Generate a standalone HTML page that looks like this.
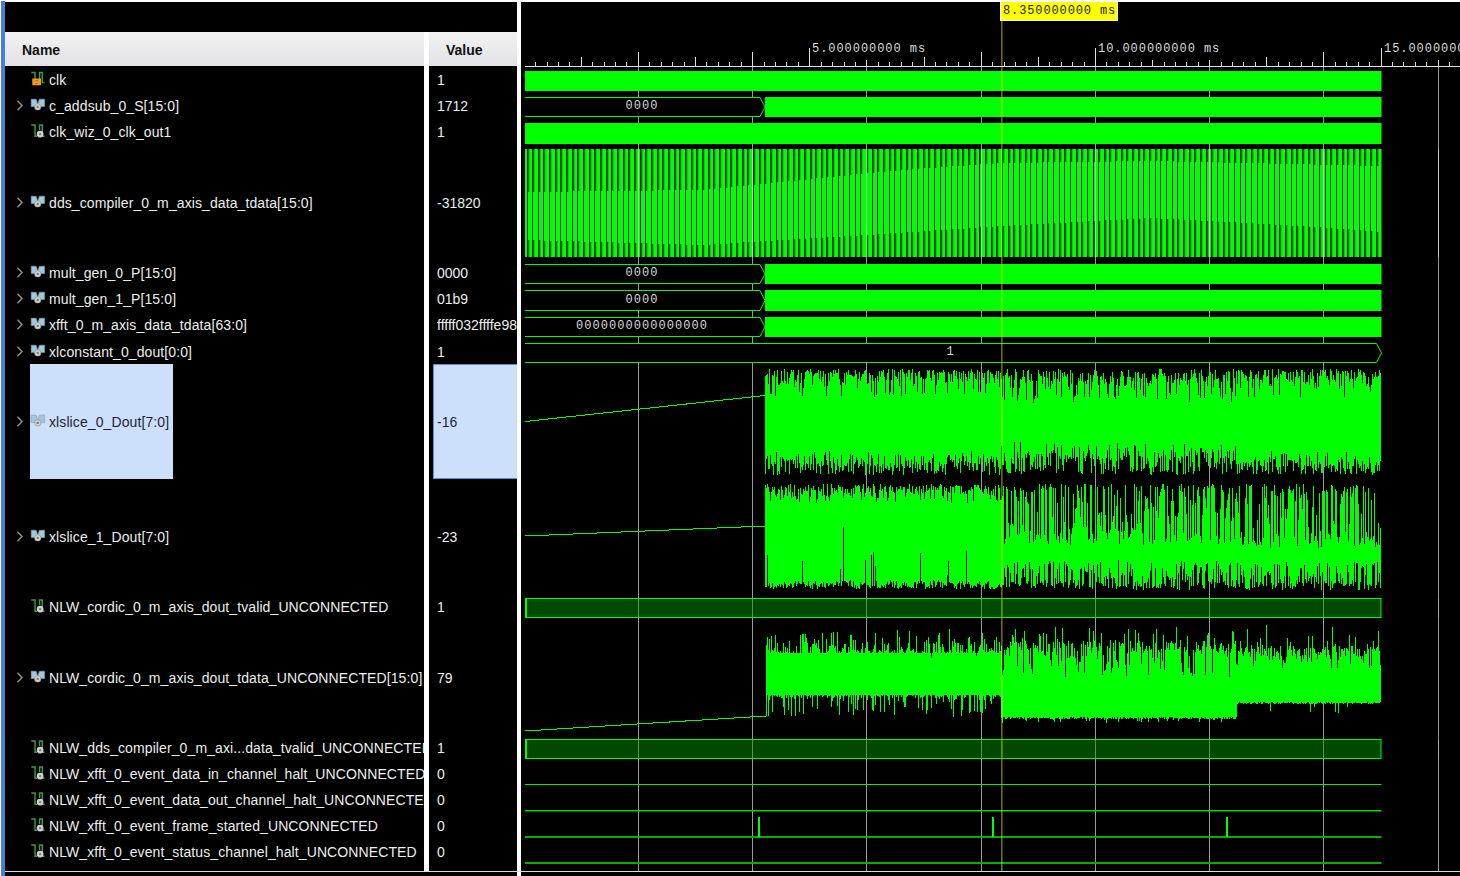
<!DOCTYPE html><html><head><meta charset="utf-8"><style>
html,body{margin:0;padding:0;width:1460px;height:876px;overflow:hidden;background:#000;}
.a{position:absolute;}
.t{position:absolute;font-family:"Liberation Sans",sans-serif;font-size:14px;letter-spacing:0.1px;color:#eeeeee;white-space:nowrap;line-height:16px;}
.hd{position:absolute;font-family:"Liberation Sans",sans-serif;font-size:14px;font-weight:bold;color:#111;white-space:nowrap;line-height:16px;}
svg{position:absolute;left:0;top:0;}
</style></head><body><div class="a" style="left:0;top:0;width:1460px;height:2px;background:#fff"></div><div class="a" style="left:0;top:0;width:1px;height:876px;background:#fff"></div><div class="a" style="left:1px;top:1px;width:4px;height:875px;background:#4a7fd4"></div><div class="a" style="left:5px;top:32px;width:419px;height:34px;background:linear-gradient(#f3f3f3,#e2e2e6)"></div><div class="a" style="left:429px;top:32px;width:88px;height:34px;background:linear-gradient(#f3f3f3,#e2e2e6)"></div><div class="hd" style="left:22px;top:42px">Name</div><div class="hd" style="left:446px;top:42px">Value</div><div class="a" style="left:424px;top:32px;width:5px;height:839px;background:#fff"></div><div class="a" style="left:517px;top:2px;width:4px;height:874px;background:#fff"></div><div class="a" style="left:5px;top:871px;width:1455px;height:1px;background:#dcdcdc"></div><div class="a" style="left:30px;top:364px;width:143px;height:115px;background:#cde0fb"></div><div class="a" style="left:433px;top:364px;width:84px;height:115px;background:#cde0fb;box-shadow:inset 1px 1px 0 #5a8fd0, inset 0 -1px 0 #5a8fd0"></div><div class="a" style="left:5px;top:66px;width:419px;height:805px;overflow:hidden"><div class="t" style="left:44px;top:6px;color:#eeeeee">clk</div><svg style="left:21px;top:2px" width="24" height="22"><path d="M5.3 4.5 H9 V11 M13.6 11 V4.5 H16.3 V14.6 H18.5" stroke="#3a9e42" stroke-width="1.4" fill="none"/><rect x="6.3" y="10.5" width="8.7" height="6.8" fill="#f29a20"/><rect x="9.6" y="12" width="2" height="1" fill="#8a6a3a"/><rect x="9.6" y="15" width="2" height="1" fill="#8a6a3a"/></svg><div class="t" style="left:44px;top:32px;color:#eeeeee">c_addsub_0_S[15:0]</div><svg style="left:11px;top:34px" width="8" height="11"><path d="M1.5 0.8 L6 5.5 L1.5 10.2" stroke="#8a8a8a" stroke-width="1.6" fill="none"/></svg><svg style="left:21px;top:28px" width="24" height="22"><path d="M5.2 5.2 H10.1 L11.75 10.2 L13.4 5.2 H18.6 V12.6 H5.2 Z" fill="#9ec8e0" stroke="#8a9aa4" stroke-width="0.6"/><circle cx="11.75" cy="12.9" r="3.2" fill="#d2d2d2" stroke="#8a8a8a" stroke-width="0.6"/><circle cx="11.75" cy="12.9" r="1.2" fill="#7a7a7a"/></svg><div class="t" style="left:44px;top:58px;color:#eeeeee">clk_wiz_0_clk_out1</div><svg style="left:21px;top:54px" width="24" height="22"><path d="M5.3 5 H9 V16.3 H11 M13.6 10 V5 H16.3 V16.3 H18.6" stroke="#3a9e42" stroke-width="1.4" fill="none"/><circle cx="14.1" cy="14.1" r="3.4" fill="#d2d2d2"/><circle cx="14.1" cy="14.1" r="1.2" fill="#7a7a7a"/></svg><div class="t" style="left:44px;top:129px;color:#eeeeee">dds_compiler_0_m_axis_data_tdata[15:0]</div><svg style="left:11px;top:131px" width="8" height="11"><path d="M1.5 0.8 L6 5.5 L1.5 10.2" stroke="#8a8a8a" stroke-width="1.6" fill="none"/></svg><svg style="left:21px;top:125px" width="24" height="22"><path d="M5.2 5.2 H10.1 L11.75 10.2 L13.4 5.2 H18.6 V12.6 H5.2 Z" fill="#9ec8e0" stroke="#8a9aa4" stroke-width="0.6"/><circle cx="11.75" cy="12.9" r="3.2" fill="#d2d2d2" stroke="#8a8a8a" stroke-width="0.6"/><circle cx="11.75" cy="12.9" r="1.2" fill="#7a7a7a"/></svg><div class="t" style="left:44px;top:199px;color:#eeeeee">mult_gen_0_P[15:0]</div><svg style="left:11px;top:201px" width="8" height="11"><path d="M1.5 0.8 L6 5.5 L1.5 10.2" stroke="#8a8a8a" stroke-width="1.6" fill="none"/></svg><svg style="left:21px;top:195px" width="24" height="22"><path d="M5.2 5.2 H10.1 L11.75 10.2 L13.4 5.2 H18.6 V12.6 H5.2 Z" fill="#9ec8e0" stroke="#8a9aa4" stroke-width="0.6"/><circle cx="11.75" cy="12.9" r="3.2" fill="#d2d2d2" stroke="#8a8a8a" stroke-width="0.6"/><circle cx="11.75" cy="12.9" r="1.2" fill="#7a7a7a"/></svg><div class="t" style="left:44px;top:225px;color:#eeeeee">mult_gen_1_P[15:0]</div><svg style="left:11px;top:227px" width="8" height="11"><path d="M1.5 0.8 L6 5.5 L1.5 10.2" stroke="#8a8a8a" stroke-width="1.6" fill="none"/></svg><svg style="left:21px;top:221px" width="24" height="22"><path d="M5.2 5.2 H10.1 L11.75 10.2 L13.4 5.2 H18.6 V12.6 H5.2 Z" fill="#9ec8e0" stroke="#8a9aa4" stroke-width="0.6"/><circle cx="11.75" cy="12.9" r="3.2" fill="#d2d2d2" stroke="#8a8a8a" stroke-width="0.6"/><circle cx="11.75" cy="12.9" r="1.2" fill="#7a7a7a"/></svg><div class="t" style="left:44px;top:251px;color:#eeeeee">xfft_0_m_axis_data_tdata[63:0]</div><svg style="left:11px;top:253px" width="8" height="11"><path d="M1.5 0.8 L6 5.5 L1.5 10.2" stroke="#8a8a8a" stroke-width="1.6" fill="none"/></svg><svg style="left:21px;top:247px" width="24" height="22"><path d="M5.2 5.2 H10.1 L11.75 10.2 L13.4 5.2 H18.6 V12.6 H5.2 Z" fill="#9ec8e0" stroke="#8a9aa4" stroke-width="0.6"/><circle cx="11.75" cy="12.9" r="3.2" fill="#d2d2d2" stroke="#8a8a8a" stroke-width="0.6"/><circle cx="11.75" cy="12.9" r="1.2" fill="#7a7a7a"/></svg><div class="t" style="left:44px;top:278px;color:#eeeeee">xlconstant_0_dout[0:0]</div><svg style="left:11px;top:280px" width="8" height="11"><path d="M1.5 0.8 L6 5.5 L1.5 10.2" stroke="#8a8a8a" stroke-width="1.6" fill="none"/></svg><svg style="left:21px;top:274px" width="24" height="22"><path d="M5.2 5.2 H10.1 L11.75 10.2 L13.4 5.2 H18.6 V12.6 H5.2 Z" fill="#9ec8e0" stroke="#8a9aa4" stroke-width="0.6"/><circle cx="11.75" cy="12.9" r="3.2" fill="#d2d2d2" stroke="#8a8a8a" stroke-width="0.6"/><circle cx="11.75" cy="12.9" r="1.2" fill="#7a7a7a"/></svg><div class="t" style="left:44px;top:348px;color:#1e1e3c">xlslice_0_Dout[7:0]</div><svg style="left:11px;top:350px" width="8" height="11"><path d="M1.5 0.8 L6 5.5 L1.5 10.2" stroke="#8a8a8a" stroke-width="1.6" fill="none"/></svg><svg style="left:21px;top:344px" width="24" height="22"><path d="M5.2 5.2 H10.1 L11.75 10.2 L13.4 5.2 H18.6 V12.6 H5.2 Z" fill="#9ec8e0" stroke="#8a9aa4" stroke-width="0.6"/><circle cx="11.75" cy="12.9" r="3.2" fill="#d2d2d2" stroke="#8a8a8a" stroke-width="0.6"/><circle cx="11.75" cy="12.9" r="1.2" fill="#7a7a7a"/></svg><div class="t" style="left:44px;top:463px;color:#eeeeee">xlslice_1_Dout[7:0]</div><svg style="left:11px;top:465px" width="8" height="11"><path d="M1.5 0.8 L6 5.5 L1.5 10.2" stroke="#8a8a8a" stroke-width="1.6" fill="none"/></svg><svg style="left:21px;top:459px" width="24" height="22"><path d="M5.2 5.2 H10.1 L11.75 10.2 L13.4 5.2 H18.6 V12.6 H5.2 Z" fill="#9ec8e0" stroke="#8a9aa4" stroke-width="0.6"/><circle cx="11.75" cy="12.9" r="3.2" fill="#d2d2d2" stroke="#8a8a8a" stroke-width="0.6"/><circle cx="11.75" cy="12.9" r="1.2" fill="#7a7a7a"/></svg><div class="t" style="left:44px;top:533px;color:#eeeeee">NLW_cordic_0_m_axis_dout_tvalid_UNCONNECTED</div><svg style="left:21px;top:529px" width="24" height="22"><path d="M5.3 5 H9 V16.3 H11 M13.6 10 V5 H16.3 V16.3 H18.6" stroke="#3a9e42" stroke-width="1.4" fill="none"/><circle cx="14.1" cy="14.1" r="3.4" fill="#d2d2d2"/><circle cx="14.1" cy="14.1" r="1.2" fill="#7a7a7a"/></svg><div class="t" style="left:44px;top:604px;color:#eeeeee">NLW_cordic_0_m_axis_dout_tdata_UNCONNECTED[15:0]</div><svg style="left:11px;top:606px" width="8" height="11"><path d="M1.5 0.8 L6 5.5 L1.5 10.2" stroke="#8a8a8a" stroke-width="1.6" fill="none"/></svg><svg style="left:21px;top:600px" width="24" height="22"><path d="M5.2 5.2 H10.1 L11.75 10.2 L13.4 5.2 H18.6 V12.6 H5.2 Z" fill="#9ec8e0" stroke="#8a9aa4" stroke-width="0.6"/><circle cx="11.75" cy="12.9" r="3.2" fill="#d2d2d2" stroke="#8a8a8a" stroke-width="0.6"/><circle cx="11.75" cy="12.9" r="1.2" fill="#7a7a7a"/></svg><div class="t" style="left:44px;top:674px;color:#eeeeee">NLW_dds_compiler_0_m_axi...data_tvalid_UNCONNECTED</div><svg style="left:21px;top:670px" width="24" height="22"><path d="M5.3 5 H9 V16.3 H11 M13.6 10 V5 H16.3 V16.3 H18.6" stroke="#3a9e42" stroke-width="1.4" fill="none"/><circle cx="14.1" cy="14.1" r="3.4" fill="#d2d2d2"/><circle cx="14.1" cy="14.1" r="1.2" fill="#7a7a7a"/></svg><div class="t" style="left:44px;top:700px;color:#eeeeee">NLW_xfft_0_event_data_in_channel_halt_UNCONNECTED</div><svg style="left:21px;top:696px" width="24" height="22"><path d="M5.3 5 H9 V16.3 H11 M13.6 10 V5 H16.3 V16.3 H18.6" stroke="#3a9e42" stroke-width="1.4" fill="none"/><circle cx="14.1" cy="14.1" r="3.4" fill="#d2d2d2"/><circle cx="14.1" cy="14.1" r="1.2" fill="#7a7a7a"/></svg><div class="t" style="left:44px;top:726px;color:#eeeeee">NLW_xfft_0_event_data_out_channel_halt_UNCONNECTED</div><svg style="left:21px;top:722px" width="24" height="22"><path d="M5.3 5 H9 V16.3 H11 M13.6 10 V5 H16.3 V16.3 H18.6" stroke="#3a9e42" stroke-width="1.4" fill="none"/><circle cx="14.1" cy="14.1" r="3.4" fill="#d2d2d2"/><circle cx="14.1" cy="14.1" r="1.2" fill="#7a7a7a"/></svg><div class="t" style="left:44px;top:752px;color:#eeeeee">NLW_xfft_0_event_frame_started_UNCONNECTED</div><svg style="left:21px;top:748px" width="24" height="22"><path d="M5.3 5 H9 V16.3 H11 M13.6 10 V5 H16.3 V16.3 H18.6" stroke="#3a9e42" stroke-width="1.4" fill="none"/><circle cx="14.1" cy="14.1" r="3.4" fill="#d2d2d2"/><circle cx="14.1" cy="14.1" r="1.2" fill="#7a7a7a"/></svg><div class="t" style="left:44px;top:778px;color:#eeeeee">NLW_xfft_0_event_status_channel_halt_UNCONNECTED</div><svg style="left:21px;top:774px" width="24" height="22"><path d="M5.3 5 H9 V16.3 H11 M13.6 10 V5 H16.3 V16.3 H18.6" stroke="#3a9e42" stroke-width="1.4" fill="none"/><circle cx="14.1" cy="14.1" r="3.4" fill="#d2d2d2"/><circle cx="14.1" cy="14.1" r="1.2" fill="#7a7a7a"/></svg></div><div class="a" style="left:429px;top:66px;width:88px;height:805px;overflow:hidden"><div class="t" style="left:8px;top:6px;color:#eeeeee;letter-spacing:0">1</div><div class="t" style="left:8px;top:32px;color:#eeeeee;letter-spacing:0">1712</div><div class="t" style="left:8px;top:58px;color:#eeeeee;letter-spacing:0">1</div><div class="t" style="left:8px;top:129px;color:#eeeeee;letter-spacing:0">-31820</div><div class="t" style="left:8px;top:199px;color:#eeeeee;letter-spacing:0">0000</div><div class="t" style="left:8px;top:225px;color:#eeeeee;letter-spacing:0">01b9</div><div class="t" style="left:8px;top:251px;color:#eeeeee;letter-spacing:0">fffff032ffffe98</div><div class="t" style="left:8px;top:278px;color:#eeeeee;letter-spacing:0">1</div><div class="t" style="left:8px;top:348px;color:#1e1e3c;letter-spacing:0">-16</div><div class="t" style="left:8px;top:463px;color:#eeeeee;letter-spacing:0">-23</div><div class="t" style="left:8px;top:533px;color:#eeeeee;letter-spacing:0">1</div><div class="t" style="left:8px;top:604px;color:#eeeeee;letter-spacing:0">79</div><div class="t" style="left:8px;top:674px;color:#eeeeee;letter-spacing:0">1</div><div class="t" style="left:8px;top:700px;color:#eeeeee;letter-spacing:0">0</div><div class="t" style="left:8px;top:726px;color:#eeeeee;letter-spacing:0">0</div><div class="t" style="left:8px;top:752px;color:#eeeeee;letter-spacing:0">0</div><div class="t" style="left:8px;top:778px;color:#eeeeee;letter-spacing:0">0</div></div><svg width="1460" height="876" viewBox="0 0 1460 876"><defs><clipPath id="wc"><rect x="521" y="2" width="939" height="869"/></clipPath><pattern id="ddsB" x="524.15" y="0" width="5.66" height="300" patternUnits="userSpaceOnUse"><rect x="0" y="0" width="4.5" height="300" fill="#00ff00"/><rect x="4.5" y="0" width="0.5" height="300" fill="#004800"/></pattern><pattern id="ddsD" x="524.15" y="0" width="5.66" height="300" patternUnits="userSpaceOnUse"><rect x="0" y="0" width="3.3" height="300" fill="#00ff00"/><rect x="3.3" y="0" width="1.3" height="300" fill="#006000"/><rect x="4.6" y="0" width="1.06" height="300" fill="#001800"/></pattern></defs><g clip-path="url(#wc)"><line x1="638.5" y1="66" x2="638.5" y2="871" stroke="#9a9a9a" stroke-width="1"/><line x1="752.5" y1="66" x2="752.5" y2="871" stroke="#9a9a9a" stroke-width="1"/><line x1="866.5" y1="66" x2="866.5" y2="871" stroke="#9a9a9a" stroke-width="1"/><line x1="981.5" y1="66" x2="981.5" y2="871" stroke="#9a9a9a" stroke-width="1"/><line x1="1095.5" y1="66" x2="1095.5" y2="871" stroke="#9a9a9a" stroke-width="1"/><line x1="1209.5" y1="66" x2="1209.5" y2="871" stroke="#9a9a9a" stroke-width="1"/><line x1="1323.5" y1="66" x2="1323.5" y2="871" stroke="#9a9a9a" stroke-width="1"/><line x1="1438.5" y1="66" x2="1438.5" y2="871" stroke="#9a9a9a" stroke-width="1"/><line x1="525" y1="66.5" x2="1460" y2="66.5" stroke="#e0e0e0" stroke-width="1"/><line x1="535.5" y1="62" x2="535.5" y2="66" stroke="#e0e0e0" stroke-width="1"/><line x1="547.5" y1="62" x2="547.5" y2="66" stroke="#e0e0e0" stroke-width="1"/><line x1="558.5" y1="62" x2="558.5" y2="66" stroke="#e0e0e0" stroke-width="1"/><line x1="569.5" y1="62" x2="569.5" y2="66" stroke="#e0e0e0" stroke-width="1"/><line x1="581.5" y1="57" x2="581.5" y2="66" stroke="#e0e0e0" stroke-width="1"/><line x1="592.5" y1="62" x2="592.5" y2="66" stroke="#e0e0e0" stroke-width="1"/><line x1="604.5" y1="62" x2="604.5" y2="66" stroke="#e0e0e0" stroke-width="1"/><line x1="615.5" y1="62" x2="615.5" y2="66" stroke="#e0e0e0" stroke-width="1"/><line x1="626.5" y1="62" x2="626.5" y2="66" stroke="#e0e0e0" stroke-width="1"/><line x1="638.5" y1="52" x2="638.5" y2="66" stroke="#e0e0e0" stroke-width="1"/><line x1="649.5" y1="62" x2="649.5" y2="66" stroke="#e0e0e0" stroke-width="1"/><line x1="661.5" y1="62" x2="661.5" y2="66" stroke="#e0e0e0" stroke-width="1"/><line x1="672.5" y1="62" x2="672.5" y2="66" stroke="#e0e0e0" stroke-width="1"/><line x1="684.5" y1="62" x2="684.5" y2="66" stroke="#e0e0e0" stroke-width="1"/><line x1="695.5" y1="57" x2="695.5" y2="66" stroke="#e0e0e0" stroke-width="1"/><line x1="706.5" y1="62" x2="706.5" y2="66" stroke="#e0e0e0" stroke-width="1"/><line x1="718.5" y1="62" x2="718.5" y2="66" stroke="#e0e0e0" stroke-width="1"/><line x1="729.5" y1="62" x2="729.5" y2="66" stroke="#e0e0e0" stroke-width="1"/><line x1="741.5" y1="62" x2="741.5" y2="66" stroke="#e0e0e0" stroke-width="1"/><line x1="752.5" y1="52" x2="752.5" y2="66" stroke="#e0e0e0" stroke-width="1"/><line x1="764.5" y1="62" x2="764.5" y2="66" stroke="#e0e0e0" stroke-width="1"/><line x1="775.5" y1="62" x2="775.5" y2="66" stroke="#e0e0e0" stroke-width="1"/><line x1="786.5" y1="62" x2="786.5" y2="66" stroke="#e0e0e0" stroke-width="1"/><line x1="798.5" y1="62" x2="798.5" y2="66" stroke="#e0e0e0" stroke-width="1"/><line x1="809.5" y1="48" x2="809.5" y2="66" stroke="#e0e0e0" stroke-width="1"/><line x1="821.5" y1="62" x2="821.5" y2="66" stroke="#e0e0e0" stroke-width="1"/><line x1="832.5" y1="62" x2="832.5" y2="66" stroke="#e0e0e0" stroke-width="1"/><line x1="844.5" y1="62" x2="844.5" y2="66" stroke="#e0e0e0" stroke-width="1"/><line x1="855.5" y1="62" x2="855.5" y2="66" stroke="#e0e0e0" stroke-width="1"/><line x1="866.5" y1="60" x2="866.5" y2="66" stroke="#e0e0e0" stroke-width="1"/><line x1="878.5" y1="62" x2="878.5" y2="66" stroke="#e0e0e0" stroke-width="1"/><line x1="889.5" y1="62" x2="889.5" y2="66" stroke="#e0e0e0" stroke-width="1"/><line x1="901.5" y1="62" x2="901.5" y2="66" stroke="#e0e0e0" stroke-width="1"/><line x1="912.5" y1="62" x2="912.5" y2="66" stroke="#e0e0e0" stroke-width="1"/><line x1="924.5" y1="57" x2="924.5" y2="66" stroke="#e0e0e0" stroke-width="1"/><line x1="935.5" y1="62" x2="935.5" y2="66" stroke="#e0e0e0" stroke-width="1"/><line x1="946.5" y1="62" x2="946.5" y2="66" stroke="#e0e0e0" stroke-width="1"/><line x1="958.5" y1="62" x2="958.5" y2="66" stroke="#e0e0e0" stroke-width="1"/><line x1="969.5" y1="62" x2="969.5" y2="66" stroke="#e0e0e0" stroke-width="1"/><line x1="981.5" y1="52" x2="981.5" y2="66" stroke="#e0e0e0" stroke-width="1"/><line x1="992.5" y1="62" x2="992.5" y2="66" stroke="#e0e0e0" stroke-width="1"/><line x1="1004.5" y1="62" x2="1004.5" y2="66" stroke="#e0e0e0" stroke-width="1"/><line x1="1015.5" y1="62" x2="1015.5" y2="66" stroke="#e0e0e0" stroke-width="1"/><line x1="1026.5" y1="62" x2="1026.5" y2="66" stroke="#e0e0e0" stroke-width="1"/><line x1="1038.5" y1="57" x2="1038.5" y2="66" stroke="#e0e0e0" stroke-width="1"/><line x1="1049.5" y1="62" x2="1049.5" y2="66" stroke="#e0e0e0" stroke-width="1"/><line x1="1061.5" y1="62" x2="1061.5" y2="66" stroke="#e0e0e0" stroke-width="1"/><line x1="1072.5" y1="62" x2="1072.5" y2="66" stroke="#e0e0e0" stroke-width="1"/><line x1="1084.5" y1="62" x2="1084.5" y2="66" stroke="#e0e0e0" stroke-width="1"/><line x1="1095.5" y1="48" x2="1095.5" y2="66" stroke="#e0e0e0" stroke-width="1"/><line x1="1106.5" y1="62" x2="1106.5" y2="66" stroke="#e0e0e0" stroke-width="1"/><line x1="1118.5" y1="62" x2="1118.5" y2="66" stroke="#e0e0e0" stroke-width="1"/><line x1="1129.5" y1="62" x2="1129.5" y2="66" stroke="#e0e0e0" stroke-width="1"/><line x1="1141.5" y1="62" x2="1141.5" y2="66" stroke="#e0e0e0" stroke-width="1"/><line x1="1152.5" y1="60" x2="1152.5" y2="66" stroke="#e0e0e0" stroke-width="1"/><line x1="1164.5" y1="62" x2="1164.5" y2="66" stroke="#e0e0e0" stroke-width="1"/><line x1="1175.5" y1="62" x2="1175.5" y2="66" stroke="#e0e0e0" stroke-width="1"/><line x1="1186.5" y1="62" x2="1186.5" y2="66" stroke="#e0e0e0" stroke-width="1"/><line x1="1198.5" y1="62" x2="1198.5" y2="66" stroke="#e0e0e0" stroke-width="1"/><line x1="1209.5" y1="60" x2="1209.5" y2="66" stroke="#e0e0e0" stroke-width="1"/><line x1="1221.5" y1="62" x2="1221.5" y2="66" stroke="#e0e0e0" stroke-width="1"/><line x1="1232.5" y1="62" x2="1232.5" y2="66" stroke="#e0e0e0" stroke-width="1"/><line x1="1243.5" y1="62" x2="1243.5" y2="66" stroke="#e0e0e0" stroke-width="1"/><line x1="1255.5" y1="62" x2="1255.5" y2="66" stroke="#e0e0e0" stroke-width="1"/><line x1="1266.5" y1="57" x2="1266.5" y2="66" stroke="#e0e0e0" stroke-width="1"/><line x1="1278.5" y1="62" x2="1278.5" y2="66" stroke="#e0e0e0" stroke-width="1"/><line x1="1289.5" y1="62" x2="1289.5" y2="66" stroke="#e0e0e0" stroke-width="1"/><line x1="1301.5" y1="62" x2="1301.5" y2="66" stroke="#e0e0e0" stroke-width="1"/><line x1="1312.5" y1="62" x2="1312.5" y2="66" stroke="#e0e0e0" stroke-width="1"/><line x1="1323.5" y1="52" x2="1323.5" y2="66" stroke="#e0e0e0" stroke-width="1"/><line x1="1335.5" y1="62" x2="1335.5" y2="66" stroke="#e0e0e0" stroke-width="1"/><line x1="1346.5" y1="62" x2="1346.5" y2="66" stroke="#e0e0e0" stroke-width="1"/><line x1="1358.5" y1="62" x2="1358.5" y2="66" stroke="#e0e0e0" stroke-width="1"/><line x1="1369.5" y1="62" x2="1369.5" y2="66" stroke="#e0e0e0" stroke-width="1"/><line x1="1381.5" y1="48" x2="1381.5" y2="66" stroke="#e0e0e0" stroke-width="1"/><line x1="1392.5" y1="62" x2="1392.5" y2="66" stroke="#e0e0e0" stroke-width="1"/><line x1="1403.5" y1="62" x2="1403.5" y2="66" stroke="#e0e0e0" stroke-width="1"/><line x1="1415.5" y1="62" x2="1415.5" y2="66" stroke="#e0e0e0" stroke-width="1"/><line x1="1426.5" y1="62" x2="1426.5" y2="66" stroke="#e0e0e0" stroke-width="1"/><line x1="1438.5" y1="60" x2="1438.5" y2="66" stroke="#e0e0e0" stroke-width="1"/><line x1="1449.5" y1="62" x2="1449.5" y2="66" stroke="#e0e0e0" stroke-width="1"/><line x1="1461.5" y1="62" x2="1461.5" y2="66" stroke="#e0e0e0" stroke-width="1"/><line x1="1472.5" y1="62" x2="1472.5" y2="66" stroke="#e0e0e0" stroke-width="1"/><line x1="1483.5" y1="62" x2="1483.5" y2="66" stroke="#e0e0e0" stroke-width="1"/><line x1="1495.5" y1="60" x2="1495.5" y2="66" stroke="#e0e0e0" stroke-width="1"/><text x="812" y="52" font-family="Liberation Mono" font-size="12" fill="#dcdcdc" letter-spacing="0.95">5.000000000 ms</text><text x="1098" y="52" font-family="Liberation Mono" font-size="12" fill="#dcdcdc" letter-spacing="0.95">10.000000000 ms</text><text x="1384" y="52" font-family="Liberation Mono" font-size="12" fill="#dcdcdc" letter-spacing="0.95">15.000000000 ms</text><rect x="525" y="71" width="856.5" height="20" fill="#00ff00"/><rect x="525" y="123" width="856.5" height="21" fill="#00ff00"/><path d="M525 97.5 H760 L765 107.0 L760 116.5 H525" stroke="#00ff00" stroke-width="1" fill="#000"/><rect x="765" y="97" width="616.5" height="20" fill="#00ff00"/><text x="642.075" y="109.3" text-anchor="middle" font-family="Liberation Mono" font-size="12" letter-spacing="1.05" fill="#d8d8d8">0000</text><path d="M525 264.5 H760 L765 274.0 L760 283.5 H525" stroke="#00ff00" stroke-width="1" fill="#000"/><rect x="765" y="264" width="616.5" height="20" fill="#00ff00"/><text x="642.075" y="276.3" text-anchor="middle" font-family="Liberation Mono" font-size="12" letter-spacing="1.05" fill="#d8d8d8">0000</text><path d="M525 290.5 H760 L765 300.5 L760 310.5 H525" stroke="#00ff00" stroke-width="1" fill="#000"/><rect x="765" y="290" width="616.5" height="21" fill="#00ff00"/><text x="642.075" y="302.8" text-anchor="middle" font-family="Liberation Mono" font-size="12" letter-spacing="1.05" fill="#d8d8d8">0000</text><path d="M525 317.5 H760 L765 327.0 L760 336.5 H525" stroke="#00ff00" stroke-width="1" fill="#000"/><rect x="765" y="317" width="616.5" height="20" fill="#00ff00"/><text x="642.075" y="329.3" text-anchor="middle" font-family="Liberation Mono" font-size="12" letter-spacing="1.05" fill="#d8d8d8">0000000000000000</text><path d="M525 343.5 H1376.5 L1381.5 353.0 L1376.5 362.5 H525" stroke="#00ff00" stroke-width="1" fill="#000"/><text x="950" y="354.5" text-anchor="middle" font-family="Liberation Mono" font-size="12" fill="#d8d8d8">1</text><rect x="525" y="149" width="856.5" height="108" fill="#00ff00"/><path d="M528.65 149V192M528.65 240V257M533.65 149V192M533.65 240V257M539.65 149V192M539.65 240V257M544.65 149V192M544.65 241V257M550.65 149V192M550.65 241V257M556.65 149V192M556.65 241V257M561.65 149V192M561.65 241V257M567.65 149V192M567.65 241V257M573.65 149V191M573.65 241V257M578.65 149V191M578.65 241V257M584.65 149V191M584.65 242V257M590.65 149V191M590.65 242V257M595.65 149V191M595.65 242V257M601.65 149V191M601.65 242V257M607.65 149V191M607.65 242V257M612.65 149V191M612.65 242V257M618.65 149V191M618.65 243V257M624.65 149V191M624.65 243V257M629.65 149V191M629.65 243V257M635.65 149V191M635.65 243V257M641.65 149V191M641.65 243V257M646.65 149V191M646.65 243V257M652.65 149V191M652.65 244V257M658.65 149V190M658.65 244V257M663.65 149V190M663.65 244V257M669.65 149V190M669.65 244V257M675.65 149V190M675.65 244V257M680.65 149V190M680.65 244V257M686.65 149V190M686.65 245V257M692.65 149V190M692.65 245V257M697.65 149V190M697.65 245V257M703.65 149V190M703.65 245V257M709.65 149V189M709.65 245V257M714.65 149V189M714.65 244V257M720.65 149V188M720.65 244V257M726.65 149V188M726.65 244V257M731.65 149V187M731.65 243V257M737.65 149V186M737.65 243V257M743.65 149V186M743.65 242V257M748.65 149V185M748.65 242V257M754.65 149V185M754.65 242V257M760.65 149V184M760.65 241V257M765.65 149V184M765.65 241V257M771.65 149V183M771.65 241V257M777.65 149V182M777.65 240V257M782.65 149V182M782.65 240V257M788.65 149V181M788.65 240V257M794.65 149V181M794.65 239V257M799.65 149V180M799.65 239V257M805.65 149V180M805.65 239V257M811.65 149V179M811.65 238V257M816.65 149V178M816.65 238V257M822.65 149V178M822.65 238V257M827.65 149V177M827.65 237V257M833.65 149V177M833.65 237V257M839.65 149V176M839.65 237V257M844.65 149V176M844.65 236V257M850.65 149V175M850.65 236V257M856.65 149V174M856.65 236V257M861.65 149V174M861.65 235V257M867.65 149V173M867.65 235V257M873.65 149V173M873.65 235V257M878.65 149V172M878.65 234V257M884.65 149V172M884.65 234V257M890.65 149V171M890.65 233V257M895.65 149V171M895.65 233V257M901.65 149V170M901.65 233V257M907.65 149V170M907.65 232V257M912.65 149V169M912.65 232V257M918.65 149V169M918.65 232V257M924.65 149V168M924.65 231V257M929.65 149V168M929.65 231V257M935.65 149V168M935.65 230V257M941.65 149V167M941.65 230V257M946.65 149V167M946.65 230V257M952.65 149V166M952.65 229V257M958.65 149V166M958.65 229V257M963.65 149V166M963.65 229V257M969.65 149V165M969.65 228V257M975.65 149V165M975.65 228V257M980.65 149V164M980.65 227V257M986.65 149V164M986.65 227V257M992.65 149V164M992.65 227V257M997.65 149V163M997.65 226V257M1003.65 149V163M1003.65 226V257M1009.65 149V163M1009.65 226V257M1014.65 149V163M1014.65 225V257M1020.65 149V163M1020.65 225V257M1026.65 149V163M1026.65 225V257M1031.65 149V163M1031.65 224V257M1037.65 149V163M1037.65 224V257M1043.65 149V162M1043.65 224V257M1048.65 149V162M1048.65 223V257M1054.65 149V162M1054.65 223V257M1060.65 149V162M1060.65 223V257M1065.65 149V162M1065.65 223V257M1071.65 149V162M1071.65 222V257M1077.65 149V162M1077.65 222V257M1082.65 149V162M1082.65 222V257M1088.65 149V162M1088.65 221V257M1094.65 149V162M1094.65 221V257M1099.65 149V162M1099.65 221V257M1105.65 149V162M1105.65 220V257M1110.65 149V162M1110.65 220V257M1116.65 149V161M1116.65 220V257M1122.65 149V161M1122.65 220V257M1127.65 149V161M1127.65 219V257M1133.65 149V161M1133.65 219V257M1139.65 149V161M1139.65 219V257M1144.65 149V161M1144.65 218V257M1150.65 149V161M1150.65 218V257M1156.65 149V161M1156.65 218V257M1161.65 149V161M1161.65 219V257M1167.65 149V161M1167.65 219V257M1173.65 149V161M1173.65 219V257M1178.65 149V162M1178.65 219V257M1184.65 149V162M1184.65 220V257M1190.65 149V162M1190.65 220V257M1195.65 149V162M1195.65 220V257M1201.65 149V162M1201.65 221V257M1207.65 149V162M1207.65 221V257M1212.65 149V162M1212.65 221V257M1218.65 149V162M1218.65 222V257M1224.65 149V163M1224.65 222V257M1229.65 149V163M1229.65 222V257M1235.65 149V163M1235.65 222V257M1241.65 149V163M1241.65 223V257M1246.65 149V163M1246.65 223V257M1252.65 149V163M1252.65 223V257M1258.65 149V163M1258.65 224V257M1263.65 149V163M1263.65 224V257M1269.65 149V164M1269.65 224V257M1275.65 149V164M1275.65 225V257M1280.65 149V164M1280.65 225V257M1286.65 149V164M1286.65 225V257M1292.65 149V164M1292.65 226V257M1297.65 149V164M1297.65 226V257M1303.65 149V164M1303.65 226V257M1309.65 149V164M1309.65 227V257M1314.65 149V165M1314.65 227V257M1320.65 149V165M1320.65 227V257M1326.65 149V165M1326.65 228V257M1331.65 149V165M1331.65 228V257M1337.65 149V165M1337.65 229V257M1343.65 149V165M1343.65 229V257M1348.65 149V165M1348.65 229V257M1354.65 149V165M1354.65 230V257M1360.65 149V166M1360.65 230V257M1365.65 149V166M1365.65 231V257M1371.65 149V166M1371.65 231V257M1377.65 149V166M1377.65 232V257" stroke="#007800" stroke-width="1.3"/><path d="M527.5 149V257M532.5 149V257M538.5 149V257M543.5 149V257M549.5 149V257M555.5 149V257M560.5 149V257M566.5 149V257M572.5 149V257M577.5 149V257M583.5 149V257M589.5 149V257M594.5 149V257M600.5 149V257M606.5 149V257M611.5 149V257M617.5 149V257M623.5 149V257M628.5 149V257M634.5 149V257M640.5 149V257M645.5 149V257M651.5 149V257M657.5 149V257M662.5 149V257M668.5 149V257M674.5 149V257M679.5 149V257M685.5 149V257M691.5 149V257M696.5 149V257M702.5 149V257M708.5 149V257M713.5 149V257M719.5 149V257M725.5 149V257M730.5 149V257M736.5 149V257M742.5 149V257M747.5 149V257M753.5 149V257M759.5 149V257M764.5 149V257M770.5 149V257M776.5 149V257M781.5 149V257M787.5 149V257M793.5 149V257M798.5 149V257M804.5 149V257M810.5 149V257M815.5 149V257M821.5 149V257M826.5 149V257M832.5 149V257M838.5 149V257M843.5 149V257M849.5 149V257M855.5 149V257M860.5 149V257M866.5 149V257M872.5 149V257M877.5 149V257M883.5 149V257M889.5 149V257M894.5 149V257M900.5 149V257M906.5 149V257M911.5 149V257M917.5 149V257M923.5 149V257M928.5 149V257M934.5 149V257M940.5 149V257M945.5 149V257M951.5 149V257M957.5 149V257M962.5 149V257M968.5 149V257M974.5 149V257M979.5 149V257M985.5 149V257M991.5 149V257M996.5 149V257M1002.5 149V257M1008.5 149V257M1013.5 149V257M1019.5 149V257M1025.5 149V257M1030.5 149V257M1036.5 149V257M1042.5 149V257M1047.5 149V257M1053.5 149V257M1059.5 149V257M1064.5 149V257M1070.5 149V257M1076.5 149V257M1081.5 149V257M1087.5 149V257M1093.5 149V257M1098.5 149V257M1104.5 149V257M1109.5 149V257M1115.5 149V257M1121.5 149V257M1126.5 149V257M1132.5 149V257M1138.5 149V257M1143.5 149V257M1149.5 149V257M1155.5 149V257M1160.5 149V257M1166.5 149V257M1172.5 149V257M1177.5 149V257M1183.5 149V257M1189.5 149V257M1194.5 149V257M1200.5 149V257M1206.5 149V257M1211.5 149V257M1217.5 149V257M1223.5 149V257M1228.5 149V257M1234.5 149V257M1240.5 149V257M1245.5 149V257M1251.5 149V257M1257.5 149V257M1262.5 149V257M1268.5 149V257M1274.5 149V257M1279.5 149V257M1285.5 149V257M1291.5 149V257M1296.5 149V257M1302.5 149V257M1308.5 149V257M1313.5 149V257M1319.5 149V257M1325.5 149V257M1330.5 149V257M1336.5 149V257M1342.5 149V257M1347.5 149V257M1353.5 149V257M1359.5 149V257M1364.5 149V257M1370.5 149V257M1376.5 149V257" stroke="#000" stroke-opacity="0.9" stroke-width="1"/><line x1="638.5" y1="149" x2="638.5" y2="257" stroke="#d0d0d0" stroke-opacity="0.85" stroke-width="1"/><line x1="752.5" y1="149" x2="752.5" y2="257" stroke="#d0d0d0" stroke-opacity="0.85" stroke-width="1"/><line x1="866.5" y1="149" x2="866.5" y2="257" stroke="#d0d0d0" stroke-opacity="0.85" stroke-width="1"/><line x1="981.5" y1="149" x2="981.5" y2="257" stroke="#d0d0d0" stroke-opacity="0.85" stroke-width="1"/><line x1="1095.5" y1="149" x2="1095.5" y2="257" stroke="#d0d0d0" stroke-opacity="0.85" stroke-width="1"/><line x1="1209.5" y1="149" x2="1209.5" y2="257" stroke="#d0d0d0" stroke-opacity="0.85" stroke-width="1"/><line x1="1323.5" y1="149" x2="1323.5" y2="257" stroke="#d0d0d0" stroke-opacity="0.85" stroke-width="1"/><line x1="1438.5" y1="149" x2="1438.5" y2="257" stroke="#d0d0d0" stroke-opacity="0.85" stroke-width="1"/><path d="M525 421.5 L765 395.5" stroke="#00ff00" stroke-width="1" fill="none" shape-rendering="crispEdges"/><path d="M765.5 376V474M766.5 375V459M767.5 374V456M768.5 384V469M769.5 369V469M770.5 394V455M771.5 394V464M772.5 375V466M773.5 376V475M774.5 371V462M775.5 396V464M776.5 377V452M777.5 370V475M778.5 385V471M779.5 385V474M780.5 383V457M781.5 371V467M782.5 381V457M783.5 383V459M784.5 369V461M785.5 381V472M786.5 384V459M787.5 372V461M788.5 384V460M789.5 378V474M790.5 374V459M791.5 370V460M792.5 372V459M793.5 370V464M794.5 387V460M795.5 380V468M796.5 382V456M797.5 375V468M798.5 370V454M799.5 392V463M800.5 383V473M801.5 373V467M802.5 396V470M803.5 388V465M804.5 379V456M805.5 372V470M806.5 371V463M807.5 370V464M808.5 371V468M809.5 374V456M810.5 369V470M811.5 372V464M812.5 385V454M813.5 376V470M814.5 374V452M815.5 373V458M816.5 373V473M817.5 373V464M818.5 370V463M819.5 379V466M820.5 371V474M821.5 382V461M822.5 377V466M823.5 371V465M824.5 387V455M825.5 374V452M826.5 396V460M827.5 386V465M828.5 373V474M829.5 381V451M830.5 372V461M831.5 373V468M832.5 377V473M833.5 370V457M834.5 374V463M835.5 370V474M836.5 373V470M837.5 373V459M838.5 369V466M839.5 379V472M840.5 385V467M841.5 396V455M842.5 382V471M843.5 383V470M844.5 373V465M845.5 385V466M846.5 372V466M847.5 375V463M848.5 370V472M849.5 375V459M850.5 375V454M851.5 375V471M852.5 376V455M853.5 377V474M854.5 376V464M855.5 370V462M856.5 374V457M857.5 388V460M858.5 379V468M859.5 372V466M860.5 381V464M861.5 377V458M862.5 374V466M863.5 374V460M864.5 371V462M865.5 370V475M866.5 383V470M867.5 384V464M868.5 383V452M869.5 373V474M870.5 375V466M871.5 392V455M872.5 375V458M873.5 381V475M874.5 397V465M875.5 378V466M876.5 395V472M877.5 376V464M878.5 382V454M879.5 371V473M880.5 377V466M881.5 371V473M882.5 372V464M883.5 370V471M884.5 377V456M885.5 393V468M886.5 380V469M887.5 373V466M888.5 369V470M889.5 395V470M890.5 392V463M891.5 380V467M892.5 369V475M893.5 395V471M894.5 370V465M895.5 376V455M896.5 377V468M897.5 379V467M898.5 372V454M899.5 386V471M900.5 370V455M901.5 396V464M902.5 369V466M903.5 372V475M904.5 374V468M905.5 394V457M906.5 373V461M907.5 377V466M908.5 370V460M909.5 370V468M910.5 380V467M911.5 373V459M912.5 369V473M913.5 386V464M914.5 384V456M915.5 373V468M916.5 376V462M917.5 392V472M918.5 372V464M919.5 371V469M920.5 378V470M921.5 377V456M922.5 394V465M923.5 379V456M924.5 393V470M925.5 379V463M926.5 378V470M927.5 370V473M928.5 371V462M929.5 370V460M930.5 378V463M931.5 381V471M932.5 371V458M933.5 370V454M934.5 375V474M935.5 394V471M936.5 385V473M937.5 373V470M938.5 380V471M939.5 372V462M940.5 373V466M941.5 372V464M942.5 373V472M943.5 370V468M944.5 372V464M945.5 383V475M946.5 382V464M947.5 393V457M948.5 372V455M949.5 374V455M950.5 382V460M951.5 374V459M952.5 382V462M953.5 371V460M954.5 370V467M955.5 376V455M956.5 371V466M957.5 379V469M958.5 389V463M959.5 372V458M960.5 379V473M961.5 373V461M962.5 382V453M963.5 371V456M964.5 394V465M965.5 374V461M966.5 377V456M967.5 381V466M968.5 371V462M969.5 379V470M970.5 373V463M971.5 369V451M972.5 372V467M973.5 389V471M974.5 374V463M975.5 379V463M976.5 380V470M977.5 370V470M978.5 392V456M979.5 372V464M980.5 392V458M981.5 397V464M982.5 373V472M983.5 378V454M984.5 373V471M985.5 393V462M986.5 384V466M987.5 371V458M988.5 370V463M989.5 383V475M990.5 372V459M991.5 374V456M992.5 374V462M993.5 378V457M994.5 383V467M995.5 375V473M996.5 371V457M997.5 379V460M998.5 371V467M999.5 387V475M1000.5 373V469" stroke="#00ff00" stroke-width="1"/><path d="M1001.5 379V446M1002.5 397V465M1003.5 376V465M1004.5 400V453M1005.5 375V461M1006.5 373V469M1007.5 369V472M1008.5 378V473M1009.5 376V473M1010.5 388V473M1011.5 375V458M1012.5 397V463M1013.5 388V464M1014.5 380V442M1015.5 369V472M1016.5 372V469M1017.5 401V452M1018.5 395V458M1019.5 388V471M1020.5 379V442M1021.5 380V474M1022.5 377V458M1023.5 370V471M1024.5 377V472M1025.5 383V454M1026.5 400V458M1027.5 371V453M1028.5 370V451M1029.5 380V455M1030.5 382V470M1031.5 374V465M1032.5 381V467M1033.5 403V462M1034.5 399V457M1035.5 396V469M1036.5 381V454M1037.5 398V469M1038.5 370V454M1039.5 374V467M1040.5 376V471M1041.5 376V454M1042.5 384V456M1043.5 372V470M1044.5 377V465M1045.5 389V468M1046.5 371V444M1047.5 378V457M1048.5 387V465M1049.5 372V453M1050.5 389V466M1051.5 381V451M1052.5 384V453M1053.5 371V450M1054.5 379V444M1055.5 372V453M1056.5 395V473M1057.5 379V447M1058.5 369V469M1059.5 382V456M1060.5 370V459M1061.5 397V445M1062.5 373V465M1063.5 377V471M1064.5 372V459M1065.5 376V455M1066.5 377V462M1067.5 374V455M1068.5 387V459M1069.5 390V457M1070.5 370V457M1071.5 384V459M1072.5 373V448M1073.5 402V458M1074.5 397V446M1075.5 396V461M1076.5 385V457M1077.5 395V457M1078.5 378V472M1079.5 381V447M1080.5 374V471M1081.5 381V473M1082.5 373V474M1083.5 382V451M1084.5 397V458M1085.5 381V461M1086.5 384V456M1087.5 380V453M1088.5 373V445M1089.5 397V450M1090.5 375V458M1091.5 390V473M1092.5 382V454M1093.5 375V459M1094.5 370V466M1095.5 378V457M1096.5 371V446M1097.5 376V459M1098.5 385V456M1099.5 398V460M1100.5 377V464M1101.5 376V474M1102.5 380V458M1103.5 373V474M1104.5 384V463M1105.5 379V469M1106.5 382V458M1107.5 394V450M1108.5 398V470M1109.5 384V445M1110.5 376V460M1111.5 382V458M1112.5 372V471M1113.5 378V466M1114.5 397V467M1115.5 399V474M1116.5 385V461M1117.5 379V443M1118.5 396V469M1119.5 386V449M1120.5 377V458M1121.5 371V460M1122.5 372V460M1123.5 376V453M1124.5 386V456M1125.5 386V448M1126.5 385V457M1127.5 377V447M1128.5 370V451M1129.5 377V455M1130.5 377V471M1131.5 388V467M1132.5 381V472M1133.5 378V469M1134.5 390V445M1135.5 372V446M1136.5 398V471M1137.5 373V470M1138.5 372V451M1139.5 378V456M1140.5 390V456M1141.5 379V471M1142.5 374V457M1143.5 396V469M1144.5 373V468M1145.5 397V444M1146.5 378V464M1147.5 383V458M1148.5 386V461M1149.5 383V468M1150.5 381V474M1151.5 384V475M1152.5 374V467M1153.5 375V472M1154.5 377V452M1155.5 373V467M1156.5 379V466M1157.5 399V462M1158.5 375V453M1159.5 369V458M1160.5 369V472M1161.5 369V456M1162.5 374V471M1163.5 376V450M1164.5 373V471M1165.5 376V455M1166.5 399V470M1167.5 382V472M1168.5 376V470M1169.5 393V459M1170.5 395V460M1171.5 375V450M1172.5 383V472M1173.5 383V445M1174.5 380V457M1175.5 373V452M1176.5 394V474M1177.5 379V475M1178.5 373V458M1179.5 385V461M1180.5 378V463M1181.5 380V456M1182.5 381V457M1183.5 374V474M1184.5 373V444M1185.5 381V474M1186.5 373V456M1187.5 385V456M1188.5 380V472M1189.5 402V451M1190.5 379V467M1191.5 370V448M1192.5 377V462M1193.5 374V474M1194.5 369V471M1195.5 373V450M1196.5 378V455M1197.5 383V453M1198.5 395V467M1199.5 373V471M1200.5 398V448M1201.5 370V448M1202.5 376V452M1203.5 381V452M1204.5 398V458M1205.5 382V450M1206.5 377V462M1207.5 386V453M1208.5 376V466M1209.5 369V448M1210.5 372V468M1211.5 394V458M1212.5 374V449M1213.5 387V452M1214.5 380V467M1215.5 370V463M1216.5 379V469M1217.5 379V462M1218.5 378V450M1219.5 388V464M1220.5 397V458M1221.5 382V445M1222.5 399V474M1223.5 375V458M1224.5 375V463M1225.5 394V456M1226.5 372V472M1227.5 381V451M1228.5 371V458M1229.5 372V450M1230.5 388V464M1231.5 402V469M1232.5 392V461M1233.5 369V451M1234.5 378V460M1235.5 396V446M1236.5 371V464" stroke="#00ff00" stroke-width="1"/><path d="M1237.5 384V474M1238.5 370V464M1239.5 371V473M1240.5 388V463M1241.5 370V469M1242.5 372V470M1243.5 374V462M1244.5 378V466M1245.5 375V463M1246.5 376V462M1247.5 381V470M1248.5 397V463M1249.5 377V467M1250.5 370V465M1251.5 372V462M1252.5 388V467M1253.5 379V474M1254.5 397V460M1255.5 375V457M1256.5 374V474M1257.5 378V470M1258.5 371V461M1259.5 389V460M1260.5 380V465M1261.5 380V466M1262.5 383V472M1263.5 375V466M1264.5 370V460M1265.5 370V471M1266.5 377V470M1267.5 376V462M1268.5 370V474M1269.5 386V457M1270.5 384V462M1271.5 386V451M1272.5 369V472M1273.5 395V459M1274.5 378V459M1275.5 377V456M1276.5 375V467M1277.5 379V470M1278.5 369V474M1279.5 395V467M1280.5 374V474M1281.5 375V454M1282.5 371V454M1283.5 371V466M1284.5 372V453M1285.5 372V472M1286.5 379V454M1287.5 380V466M1288.5 373V460M1289.5 382V460M1290.5 372V460M1291.5 380V460M1292.5 382V461M1293.5 372V471M1294.5 386V460M1295.5 377V463M1296.5 370V463M1297.5 372V462M1298.5 378V467M1299.5 376V454M1300.5 397V458M1301.5 370V474M1302.5 370V470M1303.5 382V469M1304.5 372V465M1305.5 384V474M1306.5 382V455M1307.5 382V466M1308.5 375V466M1309.5 385V456M1310.5 372V466M1311.5 379V461M1312.5 369V468M1313.5 376V474M1314.5 388V464M1315.5 383V470M1316.5 389V471M1317.5 373V452M1318.5 387V468M1319.5 376V462M1320.5 370V464M1321.5 376V473M1322.5 370V473M1323.5 376V461M1324.5 372V467M1325.5 370V456M1326.5 378V466M1327.5 376V453M1328.5 380V468M1329.5 385V465M1330.5 369V464M1331.5 371V472M1332.5 380V466M1333.5 375V465M1334.5 380V466M1335.5 382V472M1336.5 369V469M1337.5 373V471M1338.5 371V460M1339.5 389V462M1340.5 374V474M1341.5 386V457M1342.5 371V459M1343.5 372V468M1344.5 397V471M1345.5 371V474M1346.5 376V452M1347.5 371V469M1348.5 373V462M1349.5 382V469M1350.5 379V473M1351.5 370V474M1352.5 379V466M1353.5 388V466M1354.5 372V459M1355.5 381V456M1356.5 378V474M1357.5 377V460M1358.5 369V464M1359.5 372V468M1360.5 370V466M1361.5 375V471M1362.5 383V461M1363.5 372V471M1364.5 373V464M1365.5 376V473M1366.5 386V469M1367.5 384V467M1368.5 377V469M1369.5 387V457M1370.5 392V463M1371.5 385V472M1372.5 374V475M1373.5 379V473M1374.5 377V473M1375.5 372V465M1376.5 377V462M1377.5 377V471M1378.5 376V465M1379.5 370V471M1380.5 373V461" stroke="#00ff00" stroke-width="1"/><path d="M525 536 L765 526" stroke="#00ff00" stroke-width="1" fill="none" shape-rendering="crispEdges"/><path d="M765.5 485V587M766.5 488V587M767.5 484V555M768.5 487V586M769.5 492V583M770.5 501V588M771.5 492V587M772.5 487V583M773.5 490V589M774.5 487V587M775.5 495V586M776.5 497V588M777.5 494V585M778.5 489V586M779.5 490V584M780.5 500V587M781.5 486V584M782.5 490V585M783.5 498V588M784.5 495V582M785.5 487V584M786.5 488V588M787.5 496V587M788.5 485V585M789.5 492V586M790.5 484V583M791.5 498V584M792.5 492V588M793.5 497V587M794.5 485V583M795.5 496V581M796.5 500V586M797.5 499V584M798.5 489V581M799.5 502V583M800.5 488V584M801.5 494V584M802.5 495V561M803.5 489V582M804.5 491V584M805.5 487V587M806.5 491V585M807.5 491V586M808.5 485V581M809.5 502V586M810.5 497V588M811.5 488V585M812.5 490V589M813.5 486V583M814.5 490V584M815.5 490V581M816.5 503V585M817.5 499V589M818.5 487V586M819.5 491V587M820.5 492V584M821.5 489V583M822.5 496V587M823.5 484V582M824.5 495V587M825.5 501V588M826.5 496V583M827.5 484V583M828.5 497V586M829.5 501V585M830.5 495V583M831.5 484V584M832.5 488V583M833.5 494V587M834.5 488V585M835.5 491V585M836.5 490V581M837.5 493V582M838.5 485V586M839.5 487V583M840.5 487V569M841.5 491V586M842.5 487V581M843.5 498V527M844.5 493V581M845.5 489V581M846.5 494V582M847.5 489V583M848.5 493V586M849.5 493V581M850.5 496V580M851.5 489V586M852.5 498V587M853.5 488V581M854.5 494V588M855.5 485V585M856.5 487V589M857.5 486V586M858.5 485V588M859.5 486V589M860.5 492V582M861.5 500V584M862.5 489V585M863.5 484V584M864.5 497V583M865.5 493V560M866.5 495V587M867.5 488V585M868.5 486V585M869.5 492V587M870.5 488V588M871.5 496V555M872.5 497V586M873.5 484V552M874.5 486V586M875.5 493V566M876.5 502V581M877.5 498V588M878.5 498V587M879.5 490V588M880.5 484V588M881.5 491V585M882.5 489V586M883.5 498V587M884.5 487V585M885.5 486V588M886.5 492V584M887.5 501V582M888.5 498V585M889.5 487V584M890.5 485V580M891.5 491V582M892.5 487V587M893.5 492V581M894.5 493V588M895.5 502V585M896.5 487V581M897.5 491V588M898.5 489V589M899.5 489V587M900.5 486V586M901.5 490V588M902.5 490V583M903.5 487V585M904.5 487V582M905.5 497V586M906.5 493V583M907.5 489V587M908.5 489V586M909.5 484V587M910.5 492V587M911.5 493V588M912.5 486V587M913.5 494V588M914.5 494V582M915.5 489V582M916.5 487V588M917.5 491V584M918.5 495V581M919.5 486V583M920.5 500V553M921.5 489V581M922.5 493V584M923.5 486V582M924.5 499V582M925.5 492V589M926.5 485V587M927.5 491V587M928.5 490V586M929.5 488V588M930.5 499V581M931.5 484V585M932.5 490V588M933.5 486V580M934.5 499V581M935.5 487V587M936.5 490V585M937.5 488V582M938.5 490V580M939.5 486V582M940.5 484V587M941.5 485V582M942.5 496V588M943.5 498V583M944.5 487V585M945.5 491V585M946.5 488V586M947.5 501V575M948.5 492V561M949.5 493V582M950.5 486V583M951.5 503V583M952.5 487V583M953.5 487V584M954.5 493V588M955.5 486V586M956.5 485V589M957.5 486V584M958.5 486V583M959.5 486V581M960.5 494V589M961.5 486V583M962.5 493V581M963.5 492V585M964.5 494V587M965.5 491V584M966.5 494V551M967.5 503V584M968.5 490V582M969.5 490V584M970.5 491V588M971.5 487V585M972.5 489V588M973.5 501V586M974.5 485V585M975.5 485V586M976.5 487V587M977.5 485V583M978.5 485V584M979.5 488V581M980.5 490V585M981.5 499V589M982.5 492V587M983.5 494V585M984.5 489V589M985.5 486V583M986.5 489V584M987.5 494V582M988.5 487V581M989.5 495V588M990.5 499V589M991.5 491V587M992.5 495V587M993.5 489V589M994.5 496V589M995.5 486V588M996.5 500V588M997.5 501V587M998.5 485V585M999.5 488V584M1000.5 500V587" stroke="#00ff00" stroke-width="1"/><path d="M1001.5 500V587M1002.5 496V585M1003.5 486V585M1004.5 544V568M1005.5 539V577M1006.5 487V587M1007.5 489V565M1008.5 523V567M1009.5 537V587M1010.5 525V573M1011.5 491V582M1012.5 524V582M1013.5 526V582M1014.5 487V563M1015.5 490V584M1016.5 497V574M1017.5 535V562M1018.5 501V584M1019.5 534V586M1020.5 488V585M1021.5 491V578M1022.5 525V569M1023.5 490V568M1024.5 532V577M1025.5 497V564M1026.5 492V583M1027.5 502V584M1028.5 504V581M1029.5 543V562M1030.5 531V569M1031.5 492V588M1032.5 492V569M1033.5 542V586M1034.5 490V586M1035.5 540V588M1036.5 535V576M1037.5 512V584M1038.5 535V573M1039.5 484V566M1040.5 539V583M1041.5 489V581M1042.5 486V583M1043.5 488V585M1044.5 535V564M1045.5 484V580M1046.5 490V587M1047.5 541V583M1048.5 544V564M1049.5 487V561M1050.5 484V563M1051.5 487V585M1052.5 517V586M1053.5 488V562M1054.5 534V588M1055.5 488V578M1056.5 540V584M1057.5 503V569M1058.5 536V583M1059.5 543V563M1060.5 533V581M1061.5 484V583M1062.5 539V583M1063.5 497V587M1064.5 522V561M1065.5 485V582M1066.5 540V564M1067.5 543V566M1068.5 487V588M1069.5 529V585M1070.5 545V580M1071.5 534V569M1072.5 528V570M1073.5 494V583M1074.5 523V580M1075.5 509V588M1076.5 508V586M1077.5 485V585M1078.5 491V580M1079.5 498V589M1080.5 517V569M1081.5 487V568M1082.5 502V586M1083.5 527V584M1084.5 484V567M1085.5 484V571M1086.5 527V572M1087.5 503V572M1088.5 540V563M1089.5 539V587M1090.5 485V587M1091.5 485V570M1092.5 534V589M1093.5 543V565M1094.5 539V573M1095.5 489V587M1096.5 541V582M1097.5 487V564M1098.5 515V577M1099.5 513V583M1100.5 526V562M1101.5 512V583M1102.5 531V584M1103.5 486V586M1104.5 489V577M1105.5 515V586M1106.5 533V576M1107.5 539V579M1108.5 487V588M1109.5 533V568M1110.5 530V573M1111.5 484V578M1112.5 522V588M1113.5 516V577M1114.5 495V578M1115.5 529V583M1116.5 506V589M1117.5 490V586M1118.5 531V560M1119.5 544V587M1120.5 498V586M1121.5 532V575M1122.5 522V573M1123.5 539V586M1124.5 531V575M1125.5 485V586M1126.5 515V587M1127.5 522V562M1128.5 538V584M1129.5 537V572M1130.5 534V564M1131.5 514V576M1132.5 528V569M1133.5 530V589M1134.5 484V586M1135.5 530V582M1136.5 487V590M1137.5 524V581M1138.5 501V586M1139.5 491V584M1140.5 523V587M1141.5 486V586M1142.5 533V576M1143.5 545V590M1144.5 511V583M1145.5 496V583M1146.5 499V588M1147.5 498V582M1148.5 509V578M1149.5 542V588M1150.5 485V571M1151.5 503V563M1152.5 544V588M1153.5 507V587M1154.5 540V586M1155.5 487V568M1156.5 511V588M1157.5 487V587M1158.5 518V588M1159.5 496V584M1160.5 492V588M1161.5 489V584M1162.5 484V568M1163.5 484V577M1164.5 490V584M1165.5 542V586M1166.5 539V571M1167.5 486V576M1168.5 516V577M1169.5 524V580M1170.5 542V578M1171.5 501V587M1172.5 489V577M1173.5 501V588M1174.5 535V586M1175.5 516V579M1176.5 541V564M1177.5 517V589M1178.5 513V573M1179.5 486V590M1180.5 491V566M1181.5 484V561M1182.5 492V580M1183.5 533V569M1184.5 488V562M1185.5 497V582M1186.5 514V574M1187.5 541V580M1188.5 486V576M1189.5 540V590M1190.5 500V577M1191.5 538V586M1192.5 505V570M1193.5 485V586M1194.5 536V565M1195.5 503V563M1196.5 534V565M1197.5 490V585M1198.5 487V583M1199.5 496V573M1200.5 536V567M1201.5 543V567M1202.5 515V585M1203.5 489V588M1204.5 487V589M1205.5 498V571M1206.5 508V564M1207.5 486V563M1208.5 488V581M1209.5 487V575M1210.5 540V582M1211.5 486V584M1212.5 484V579M1213.5 485V569M1214.5 488V588M1215.5 512V582M1216.5 536V561M1217.5 513V583M1218.5 544V564M1219.5 539V583M1220.5 509V569M1221.5 485V575M1222.5 490V572M1223.5 492V582M1224.5 543V581M1225.5 518V585M1226.5 508V573M1227.5 500V585M1228.5 494V588M1229.5 488V565M1230.5 542V563M1231.5 521V586M1232.5 488V580M1233.5 518V587M1234.5 539V586M1235.5 499V588M1236.5 493V580" stroke="#00ff00" stroke-width="1"/><path d="M1237.5 502V563M1238.5 513V584M1239.5 486V587M1240.5 538V565M1241.5 532V575M1242.5 545V583M1243.5 545V570M1244.5 537V577M1245.5 498V588M1246.5 484V589M1247.5 504V589M1248.5 544V588M1249.5 486V590M1250.5 486V579M1251.5 485V568M1252.5 542V588M1253.5 528V575M1254.5 541V587M1255.5 543V564M1256.5 546V582M1257.5 520V565M1258.5 545V587M1259.5 504V585M1260.5 542V582M1261.5 545V567M1262.5 487V584M1263.5 538V586M1264.5 484V576M1265.5 498V575M1266.5 486V586M1267.5 518V572M1268.5 505V571M1269.5 524V575M1270.5 548V573M1271.5 491V583M1272.5 491V589M1273.5 542V585M1274.5 485V564M1275.5 495V588M1276.5 534V586M1277.5 496V564M1278.5 536V583M1279.5 547V565M1280.5 493V579M1281.5 518V583M1282.5 489V590M1283.5 492V583M1284.5 538V576M1285.5 509V588M1286.5 519V562M1287.5 509V566M1288.5 489V586M1289.5 486V576M1290.5 490V588M1291.5 493V583M1292.5 491V589M1293.5 489V586M1294.5 537V586M1295.5 501V587M1296.5 484V580M1297.5 546V584M1298.5 520V576M1299.5 487V582M1300.5 498V568M1301.5 495V568M1302.5 509V583M1303.5 484V586M1304.5 494V565M1305.5 540V579M1306.5 492V583M1307.5 500V572M1308.5 527V581M1309.5 544V578M1310.5 543V576M1311.5 533V584M1312.5 507V577M1313.5 486V574M1314.5 541V588M1315.5 536V577M1316.5 515V582M1317.5 541V566M1318.5 548V584M1319.5 493V563M1320.5 531V576M1321.5 547V590M1322.5 491V572M1323.5 494V582M1324.5 491V581M1325.5 539V583M1326.5 490V583M1327.5 492V563M1328.5 534V586M1329.5 535V567M1330.5 539V590M1331.5 485V581M1332.5 486V588M1333.5 521V584M1334.5 524V583M1335.5 489V583M1336.5 491V566M1337.5 537V573M1338.5 543V581M1339.5 537V583M1340.5 504V573M1341.5 494V584M1342.5 497V578M1343.5 491V586M1344.5 487V586M1345.5 532V585M1346.5 492V584M1347.5 489V565M1348.5 541V572M1349.5 524V586M1350.5 487V584M1351.5 497V584M1352.5 493V580M1353.5 486V586M1354.5 546V562M1355.5 488V582M1356.5 485V563M1357.5 486V563M1358.5 504V590M1359.5 545V590M1360.5 543V582M1361.5 514V568M1362.5 538V566M1363.5 486V567M1364.5 544V589M1365.5 492V575M1366.5 532V564M1367.5 537V585M1368.5 488V590M1369.5 541V584M1370.5 539V585M1371.5 500V586M1372.5 540V564M1373.5 536V565M1374.5 493V563M1375.5 547V588M1376.5 542V585M1377.5 545V562M1378.5 523V582M1379.5 545V573M1380.5 528V588" stroke="#00ff00" stroke-width="1"/><rect x="525.5" y="598.5" width="855.5" height="19" fill="#004a00" stroke="#00ff00" stroke-width="1"/><rect x="525" y="598" width="2" height="20" fill="#00ff00"/><path d="M525 731 L766 716 V660" stroke="#00ff00" stroke-width="1" fill="none" shape-rendering="crispEdges"/><path d="M766.5 645V713M767.5 637V695M768.5 650V716M769.5 639V700M770.5 653V696M771.5 636V695M772.5 650V712M773.5 651V695M774.5 648V696M775.5 635V695M776.5 652V696M777.5 643V697M778.5 652V695M779.5 653V697M780.5 651V696M781.5 653V698M782.5 653V698M783.5 643V707M784.5 653V715M785.5 647V695M786.5 652V698M787.5 648V695M788.5 653V710M789.5 641V695M790.5 653V697M791.5 653V716M792.5 653V697M793.5 651V695M794.5 653V699M795.5 653V716M796.5 646V695M797.5 653V695M798.5 653V696M799.5 653V712M800.5 635V695M801.5 653V698M802.5 634V695M803.5 634V714M804.5 642V695M805.5 634V695M806.5 638V696M807.5 643V699M808.5 653V696M809.5 653V695M810.5 647V698M811.5 653V695M812.5 644V707M813.5 644V696M814.5 639V695M815.5 645V695M816.5 643V695M817.5 648V709M818.5 640V695M819.5 649V696M820.5 653V695M821.5 653V695M822.5 633V697M823.5 653V696M824.5 653V695M825.5 653V695M826.5 639V695M827.5 652V698M828.5 651V696M829.5 646V696M830.5 646V695M831.5 633V707M832.5 645V701M833.5 632V698M834.5 648V697M835.5 646V695M836.5 653V696M837.5 632V706M838.5 653V695M839.5 651V715M840.5 653V699M841.5 652V695M842.5 648V696M843.5 649V701M844.5 644V696M845.5 644V695M846.5 653V696M847.5 653V695M848.5 647V712M849.5 652V697M850.5 635V695M851.5 635V704M852.5 650V695M853.5 640V715M854.5 650V695M855.5 640V709M856.5 652V695M857.5 650V710M858.5 651V700M859.5 653V695M860.5 653V695M861.5 649V698M862.5 643V695M863.5 653V710M864.5 653V695M865.5 648V695M866.5 650V696M867.5 642V700M868.5 651V695M869.5 651V695M870.5 653V696M871.5 653V698M872.5 652V710M873.5 649V711M874.5 645V696M875.5 633V705M876.5 653V695M877.5 653V696M878.5 652V696M879.5 650V697M880.5 651V712M881.5 652V695M882.5 638V696M883.5 653V695M884.5 644V712M885.5 651V695M886.5 650V695M887.5 645V696M888.5 643V700M889.5 653V705M890.5 653V695M891.5 652V695M892.5 651V698M893.5 653V695M894.5 650V715M895.5 653V695M896.5 653V697M897.5 630V695M898.5 653V701M899.5 637V695M900.5 650V695M901.5 647V697M902.5 649V695M903.5 652V702M904.5 653V707M905.5 653V707M906.5 650V697M907.5 648V696M908.5 643V695M909.5 631V695M910.5 651V695M911.5 651V695M912.5 650V696M913.5 649V695M914.5 653V695M915.5 652V698M916.5 636V695M917.5 653V695M918.5 653V708M919.5 653V695M920.5 653V698M921.5 653V697M922.5 651V710M923.5 652V697M924.5 642V696M925.5 653V695M926.5 640V714M927.5 653V710M928.5 637V695M929.5 644V695M930.5 653V696M931.5 658V708M932.5 653V695M933.5 643V695M934.5 644V695M935.5 652V698M936.5 642V704M937.5 653V696M938.5 635V697M939.5 633V699M940.5 647V696M941.5 653V697M942.5 644V696M943.5 647V702M944.5 652V695M945.5 653V695M946.5 653V695M947.5 652V697M948.5 653V699M949.5 629V702M950.5 650V695M951.5 653V709M952.5 641V695M953.5 647V717M954.5 639V700M955.5 643V699M956.5 652V699M957.5 643V695M958.5 643V696M959.5 653V695M960.5 645V695M961.5 651V716M962.5 645V710M963.5 653V695M964.5 652V698M965.5 653V697M966.5 649V695M967.5 653V695M968.5 638V695M969.5 637V713M970.5 646V712M971.5 644V695M972.5 653V695M973.5 651V695M974.5 642V711M975.5 653V695M976.5 656V695M977.5 653V712M978.5 651V695M979.5 647V700M980.5 645V712M981.5 641V710M982.5 633V713M983.5 650V696M984.5 639V700M985.5 652V709M986.5 644V695M987.5 652V695M988.5 652V695M989.5 649V696M990.5 651V701M991.5 648V704M992.5 650V695M993.5 651V699M994.5 640V696M995.5 652V697M996.5 637V695M997.5 653V695M998.5 653V695M999.5 642V696M1000.5 651V697" stroke="#00ff00" stroke-width="1"/><path d="M1001.5 646V718M1002.5 675V723M1003.5 670V717M1004.5 650V717M1005.5 655V719M1006.5 650V719M1007.5 647V718M1008.5 648V717M1009.5 656V717M1010.5 642V719M1011.5 646V718M1012.5 635V717M1013.5 637V718M1014.5 643V718M1015.5 629V718M1016.5 642V717M1017.5 666V718M1018.5 643V717M1019.5 647V719M1020.5 642V717M1021.5 650V717M1022.5 638V718M1023.5 673V719M1024.5 631V717M1025.5 641V720M1026.5 644V721M1027.5 649V718M1028.5 650V718M1029.5 664V717M1030.5 648V719M1031.5 669V718M1032.5 674V718M1033.5 643V717M1034.5 648V718M1035.5 645V718M1036.5 648V717M1037.5 646V718M1038.5 652V722M1039.5 634V718M1040.5 636V718M1041.5 652V718M1042.5 651V718M1043.5 633V717M1044.5 655V718M1045.5 656V718M1046.5 634V718M1047.5 652V718M1048.5 644V718M1049.5 644V717M1050.5 660V719M1051.5 666V719M1052.5 652V719M1053.5 642V720M1054.5 648V722M1055.5 627V718M1056.5 655V718M1057.5 639V718M1058.5 666V717M1059.5 642V719M1060.5 648V722M1061.5 661V719M1062.5 628V719M1063.5 643V717M1064.5 644V719M1065.5 677V718M1066.5 646V718M1067.5 658V719M1068.5 641V719M1069.5 658V719M1070.5 656V717M1071.5 644V717M1072.5 643V718M1073.5 657V717M1074.5 648V719M1075.5 658V718M1076.5 665V719M1077.5 651V718M1078.5 672V718M1079.5 662V718M1080.5 662V717M1081.5 644V717M1082.5 656V719M1083.5 641V717M1084.5 673V717M1085.5 645V719M1086.5 656V721M1087.5 642V717M1088.5 647V718M1089.5 628V721M1090.5 642V719M1091.5 653V718M1092.5 648V718M1093.5 631V718M1094.5 641V717M1095.5 635V721M1096.5 647V718M1097.5 659V717M1098.5 651V718M1099.5 643V718M1100.5 646V718M1101.5 633V719M1102.5 675V718M1103.5 655V717M1104.5 671V720M1105.5 670V718M1106.5 664V723M1107.5 646V719M1108.5 662V718M1109.5 648V718M1110.5 640V718M1111.5 673V719M1112.5 668V717M1113.5 643V719M1114.5 651V717M1115.5 640V719M1116.5 660V719M1117.5 662V717M1118.5 668V722M1119.5 642V719M1120.5 646V717M1121.5 644V719M1122.5 643V719M1123.5 644V717M1124.5 634V717M1125.5 665V718M1126.5 676V719M1127.5 653V718M1128.5 629V719M1129.5 665V718M1130.5 641V717M1131.5 652V718M1132.5 648V718M1133.5 651V719M1134.5 651V718M1135.5 630V718M1136.5 652V718M1137.5 643V721M1138.5 633V717M1139.5 641V721M1140.5 647V718M1141.5 664V722M1142.5 642V719M1143.5 653V717M1144.5 651V718M1145.5 649V719M1146.5 646V717M1147.5 651V718M1148.5 675V722M1149.5 646V718M1150.5 650V718M1151.5 649V719M1152.5 658V717M1153.5 634V718M1154.5 663V718M1155.5 643V718M1156.5 629V718M1157.5 658V719M1158.5 650V722M1159.5 652V717M1160.5 669V718M1161.5 649V717M1162.5 661V718M1163.5 635V717M1164.5 670V719M1165.5 650V717M1166.5 642V719M1167.5 648V721M1168.5 643V719M1169.5 650V717M1170.5 643V717M1171.5 641V717M1172.5 643V717M1173.5 644V720M1174.5 650V718M1175.5 643V718M1176.5 627V718M1177.5 649V718M1178.5 649V721M1179.5 647V719M1180.5 640V718M1181.5 663V719M1182.5 672V718M1183.5 675V718M1184.5 647V718M1185.5 652V717M1186.5 650V718M1187.5 636V718M1188.5 668V719M1189.5 656V719M1190.5 673V717M1191.5 673V719M1192.5 676V717M1193.5 650V718M1194.5 674V718M1195.5 652V718M1196.5 642V718M1197.5 649V718M1198.5 645V718M1199.5 651V722M1200.5 650V719M1201.5 654V717M1202.5 646V718M1203.5 641V718M1204.5 641V719M1205.5 675V717M1206.5 647V719M1207.5 635V719M1208.5 633V719M1209.5 672V718M1210.5 646V718M1211.5 649V719M1212.5 673V718M1213.5 649V720M1214.5 638V720M1215.5 645V718M1216.5 651V718M1217.5 652V719M1218.5 653V717M1219.5 648V718M1220.5 644V718M1221.5 643V722M1222.5 650V719M1223.5 646V717M1224.5 654V719M1225.5 651V717M1226.5 648V719M1227.5 657V719M1228.5 644V717M1229.5 677V719M1230.5 653V717M1231.5 649V718M1232.5 631V717M1233.5 632V719M1234.5 644V719M1235.5 641V719M1236.5 664V717" stroke="#00ff00" stroke-width="1"/><path d="M1237.5 665V704M1238.5 651V703M1239.5 652V702M1240.5 641V703M1241.5 648V703M1242.5 654V703M1243.5 656V704M1244.5 652V703M1245.5 648V703M1246.5 647V704M1247.5 629V703M1248.5 653V703M1249.5 652V702M1250.5 657V704M1251.5 645V704M1252.5 649V703M1253.5 666V703M1254.5 649V702M1255.5 661V703M1256.5 652V704M1257.5 642V704M1258.5 647V702M1259.5 654V703M1260.5 638V702M1261.5 656V704M1262.5 645V704M1263.5 655V702M1264.5 649V702M1265.5 651V703M1266.5 625V703M1267.5 656V703M1268.5 648V704M1269.5 660V703M1270.5 648V711M1271.5 646V702M1272.5 660V702M1273.5 656V703M1274.5 648V704M1275.5 657V704M1276.5 652V703M1277.5 651V702M1278.5 653V704M1279.5 660V703M1280.5 646V704M1281.5 656V703M1282.5 668V703M1283.5 660V702M1284.5 663V703M1285.5 663V703M1286.5 657V703M1287.5 638V703M1288.5 650V702M1289.5 646V703M1290.5 642V702M1291.5 650V702M1292.5 656V703M1293.5 646V704M1294.5 649V703M1295.5 654V703M1296.5 659V703M1297.5 651V704M1298.5 650V704M1299.5 649V703M1300.5 656V704M1301.5 662V702M1302.5 655V703M1303.5 659V704M1304.5 649V703M1305.5 655V704M1306.5 648V703M1307.5 662V702M1308.5 636V702M1309.5 658V704M1310.5 648V712M1311.5 662V704M1312.5 636V704M1313.5 648V703M1314.5 649V707M1315.5 653V704M1316.5 654V704M1317.5 659V703M1318.5 652V702M1319.5 655V703M1320.5 652V702M1321.5 653V703M1322.5 649V704M1323.5 655V703M1324.5 650V703M1325.5 647V704M1326.5 657V702M1327.5 641V703M1328.5 650V702M1329.5 655V703M1330.5 659V704M1331.5 668V702M1332.5 627V704M1333.5 647V703M1334.5 646V703M1335.5 644V712M1336.5 652V703M1337.5 668V703M1338.5 660V713M1339.5 646V703M1340.5 657V703M1341.5 649V703M1342.5 649V703M1343.5 651V704M1344.5 648V703M1345.5 656V703M1346.5 648V702M1347.5 649V707M1348.5 651V703M1349.5 635V703M1350.5 664V703M1351.5 646V703M1352.5 646V704M1353.5 654V703M1354.5 654V703M1355.5 637V702M1356.5 656V703M1357.5 649V703M1358.5 657V703M1359.5 649V703M1360.5 656V703M1361.5 659V704M1362.5 656V703M1363.5 663V703M1364.5 651V703M1365.5 654V703M1366.5 654V703M1367.5 644V702M1368.5 649V704M1369.5 668V703M1370.5 647V704M1371.5 666V703M1372.5 649V704M1373.5 641V703M1374.5 649V702M1375.5 651V703M1376.5 648V703M1377.5 647V703M1378.5 631V703M1379.5 651V703M1380.5 665V702" stroke="#00ff00" stroke-width="1"/><rect x="525.5" y="739.5" width="855.5" height="19" fill="#004a00" stroke="#00ff00" stroke-width="1"/><rect x="525" y="739" width="2" height="20" fill="#00ff00"/><line x1="525" y1="784.5" x2="1381.5" y2="784.5" stroke="#00f000" stroke-width="1.2"/><line x1="525" y1="810.7" x2="1381.5" y2="810.7" stroke="#00d800" stroke-width="1.5"/><line x1="525" y1="837" x2="1381.5" y2="837" stroke="#00b000" stroke-width="2"/><line x1="525" y1="863" x2="1381.5" y2="863" stroke="#00b000" stroke-width="2"/><rect x="758" y="817" width="2" height="20" fill="#00ff00"/><rect x="992" y="817" width="2" height="20" fill="#00ff00"/><rect x="1226" y="817" width="2" height="20" fill="#00ff00"/><line x1="638.5" y1="599" x2="638.5" y2="617" stroke="#c0c0c0" stroke-opacity="0.55" stroke-width="1"/><line x1="638.5" y1="740" x2="638.5" y2="758" stroke="#c0c0c0" stroke-opacity="0.55" stroke-width="1"/><line x1="752.5" y1="599" x2="752.5" y2="617" stroke="#c0c0c0" stroke-opacity="0.55" stroke-width="1"/><line x1="752.5" y1="740" x2="752.5" y2="758" stroke="#c0c0c0" stroke-opacity="0.55" stroke-width="1"/><line x1="866.5" y1="599" x2="866.5" y2="617" stroke="#c0c0c0" stroke-opacity="0.55" stroke-width="1"/><line x1="866.5" y1="740" x2="866.5" y2="758" stroke="#c0c0c0" stroke-opacity="0.55" stroke-width="1"/><line x1="981.5" y1="599" x2="981.5" y2="617" stroke="#c0c0c0" stroke-opacity="0.55" stroke-width="1"/><line x1="981.5" y1="740" x2="981.5" y2="758" stroke="#c0c0c0" stroke-opacity="0.55" stroke-width="1"/><line x1="1095.5" y1="599" x2="1095.5" y2="617" stroke="#c0c0c0" stroke-opacity="0.55" stroke-width="1"/><line x1="1095.5" y1="740" x2="1095.5" y2="758" stroke="#c0c0c0" stroke-opacity="0.55" stroke-width="1"/><line x1="1209.5" y1="599" x2="1209.5" y2="617" stroke="#c0c0c0" stroke-opacity="0.55" stroke-width="1"/><line x1="1209.5" y1="740" x2="1209.5" y2="758" stroke="#c0c0c0" stroke-opacity="0.55" stroke-width="1"/><line x1="1323.5" y1="599" x2="1323.5" y2="617" stroke="#c0c0c0" stroke-opacity="0.55" stroke-width="1"/><line x1="1323.5" y1="740" x2="1323.5" y2="758" stroke="#c0c0c0" stroke-opacity="0.55" stroke-width="1"/><line x1="1438.5" y1="599" x2="1438.5" y2="617" stroke="#c0c0c0" stroke-opacity="0.55" stroke-width="1"/><line x1="1438.5" y1="740" x2="1438.5" y2="758" stroke="#c0c0c0" stroke-opacity="0.55" stroke-width="1"/><line x1="1001.9" y1="20" x2="1001.9" y2="871" stroke="#ffee00" stroke-opacity="0.72" stroke-width="1"/><rect x="1000.5" y="1.5" width="117" height="19" fill="#ffff00" stroke="#f0f0f0" stroke-width="1"/><text x="1003" y="14" font-family="Liberation Mono" font-size="12" fill="#222" letter-spacing="0.88">8.350000000 ms</text></g></svg></body></html>
